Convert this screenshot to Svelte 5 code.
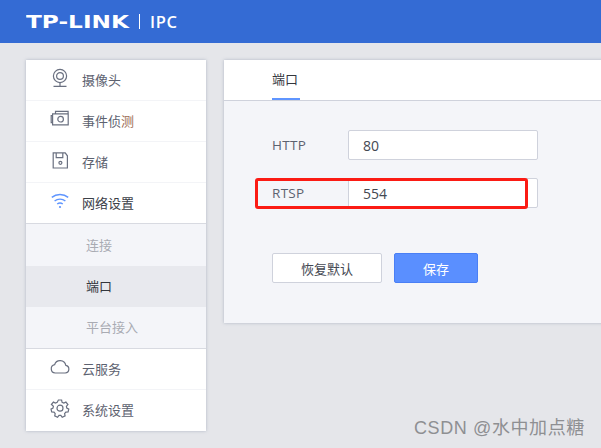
<script>
  const subs = [
    { label: "连接" },
    { label: "端口", active: true },
    { label: "平台接入" }
  ];
</script>

<div class="page">
  <header class="top">
    <span class="logo">TP-LINK</span>
    <span class="sep"></span>
    <span class="prod">IPC</span>
  </header>

  <div class="main">
    <nav class="side">
      <div class="item">
        <svg viewBox="0 0 20 20" width="20" height="20" fill="none" stroke="#6a7080" stroke-width="1.2">
          <circle cx="10" cy="8" r="6.6" />
          <circle cx="10" cy="8" r="3.4" />
          <path d="M10 14.6V18M3.5 18.4h13" />
        </svg>
        <span>摄像头</span>
      </div>
      <div class="item">
        <svg viewBox="0 0 20 20" width="20" height="20" fill="none" stroke="#6a7080" stroke-width="1.2">
          <path d="M2.6 6.6H1.2v7h1.400M2.600 4.800h15.600v11H2.600zM5.500 4.600V2.400h12.600v2.400" />
          <circle cx="10.600" cy="10.200" r="2.800" />
        </svg>
        <span>事件侦<span class="tinted">测</span></span>
      </div>
      <div class="item">
        <svg viewBox="0 0 20 20" width="20" height="20" fill="none" stroke="#6a7080" stroke-width="1.2">
          <path d="M3.200 2.800h12l2.200 3v12.200H3.200zM6.200 3v4.600h6.600V3" />
          <circle cx="10.400" cy="12.800" r="1.500" />
        </svg>
        <span>存储</span>
      </div>
      <div class="item open">
        <svg viewBox="0 0 20 20" width="20" height="20" fill="none" stroke="#5f95ff" stroke-width="1.4">
          <path d="M1.800 6.400C6.400 2.600 13.600 2.600 18.200 6.400" />
          <path d="M4.600 10c3-2.500 7.800-2.500 10.800 0" />
          <path d="M7.200 13c1.600-1.200 4-1.200 5.600 0" />
          <circle cx="10" cy="16" r="1.100" fill="#5f95ff" stroke="none" />
        </svg>
        <span>网络设置</span>
      </div>
      <div class="subs">
        {#each subs as s}
          <div class="sub" class:active={s.active}>{s.label}</div>
        {/each}
      </div>
      <div class="item">
        <svg viewBox="0 0 20 20" width="20" height="20" fill="none" stroke="#6a7080" stroke-width="1.2">
          <path d="M5.200 16h10a3.900 3.900 0 0 0 .6-7.700 5.800 5.800 0 0 0-11.200-.6 4.200 4.200 0 0 0 .6 8.300z" />
        </svg>
        <span>云服务</span>
      </div>
      <div class="item last">
        <svg viewBox="0 0 20 20" width="20" height="20" fill="none" stroke="#6a7080" stroke-width="1.2">
          <path d="M8.400 2h3.200l.5 2.300 1.700.8 2.100-1 2 2.400-1.500 1.800.4 1.800 2 1-.7 2.900-2.300.1-1.200 1.500.5 2.300-2.900 1.300-1.400-1.800h-1.800l-1.400 1.800-2.900-1.300.5-2.300-1.200-1.500-2.300-.1-.7-2.900 2-1 .4-1.800L1.400 6.500l2-2.400 2.100 1 1.700-.8z" />
          <circle cx="10" cy="10.200" r="3" />
        </svg>
        <span>系统设置</span>
      </div>
    </nav>

    <section class="panel">
      <div class="tabs">
        <div class="tab">端口</div>
      </div>
      <div class="form">
        <div class="row">
          <span class="lbl">HTTP</span>
          <div class="field">80</div>
        </div>
        <div class="row">
          <span class="lbl">RTSP</span>
          <div class="field">554</div>
          <div class="mark"></div>
        </div>
        <div class="btns">
          <button class="btn plain">恢复默认</button>
          <button class="btn primary">保存</button>
        </div>
      </div>
    </section>
  </div>

  <div class="wm">CSDN @水中加点糖</div>
</div>

<style>
:global(body) {
  margin: 0;
}
.page {
  position: relative;
  width: 601px;
  height: 448px;
  overflow: hidden;
  background: #e5e6ea;
  font-family: "Noto Sans CJK SC", "Open Sans", sans-serif;
  font-size: 13px;
  color: #5d6270;
}
.top {
  height: 43px;
  background: #346bd4;
  display: flex;
  align-items: center;
  padding-left: 26px;
  color: #fff;
}
.logo {
  font-family: "DejaVu Sans", sans-serif;
  font-weight: 700;
  font-size: 18px;
  line-height: 20px;
  width: 113px;
  transform: scaleX(1.29);
  transform-origin: left center;
}
.sep {
  width: 1px;
  height: 15px;
  background: #fff;
  margin-right: 10px;
}
.prod {
  font-family: "Open Sans", sans-serif;
  font-size: 16.5px;
  font-weight: 600;
  letter-spacing: 0.6px;
}
.main {
  display: flex;
  align-items: flex-start;
  padding-top: 17px;
  padding-left: 26px;
  gap: 18px;
}
.side {
  flex: none;
  width: 180px;
  background: #fff;
  box-shadow: 0 0 3px rgba(130, 140, 165, 0.55);
}
.item {
  height: 41px;
  box-sizing: border-box;
  display: flex;
  align-items: center;
  padding-left: 24px;
  padding-bottom: 2px;
  gap: 12px;
  border-bottom: 1px solid #f3f4f7;
}
.item svg {
  margin-top: -3px;
}
.item.open {
  color: #3c4048;
  border-bottom: 1px solid #d8dae1;
}
.item.last {
  border-bottom: 0;
}
.tinted {
  color: #9a6a50;
}
.subs {
  background: #f4f5f9;
  border-bottom: 1px solid #d8dae1;
  padding-top: 1px;
}
.sub {
  height: 41px;
  box-sizing: border-box;
  display: flex;
  align-items: center;
  padding-left: 60px;
  padding-bottom: 2px;
  color: #a9abb3;
}
.sub.active {
  background: #e8e9ee;
  color: #33363d;
}
.panel {
  flex: none;
  width: 400px;
  height: 263px;
  background: #f4f5f9;
  box-shadow: 0 0 3px rgba(130, 140, 165, 0.55);
}
.tabs {
  height: 40px;
  background: #fff;
  border-bottom: 1px solid #cfd2dc;
  padding-left: 48px;
}
.tab {
  width: 28px;
  height: 40px;
  box-sizing: border-box;
  line-height: 38px;
  color: #33363d;
  border-bottom: 2px solid #5f95ff;
}
.form {
  padding: 29px 0 0 48px;
}
.row {
  position: relative;
  display: flex;
  align-items: center;
  height: 30px;
  margin-bottom: 18px;
}
.lbl {
  width: 76px;
  font-family: "Open Sans", sans-serif;
  font-size: 13.5px;
  letter-spacing: 0.3px;
}
.field {
  width: 190px;
  height: 30px;
  box-sizing: border-box;
  padding-left: 14px;
  line-height: 30px;
  background: #fff;
  border: 1px solid #cfd2dc;
  border-radius: 2px;
  font-family: "Open Sans", sans-serif;
  font-size: 14px;
  color: #444852;
}
.mark {
  position: absolute;
  left: -17px;
  top: 0;
  width: 273px;
  height: 31px;
  box-sizing: border-box;
  border: 3px solid #fb1b14;
  border-radius: 3px;
}
.btns {
  display: flex;
  gap: 12px;
  margin-top: 45px;
}
.btn {
  height: 30px;
  box-sizing: border-box;
  border-radius: 2px;
  font-family: inherit;
  font-size: 13px;
  padding: 0;
}
.plain {
  width: 110px;
  background: #fff;
  border: 1px solid #cfd2dc;
  color: #444852;
}
.primary {
  width: 84px;
  background: #5a8fff;
  border: 1px solid #4a7ff5;
  color: #fff;
}
.wm {
  position: absolute;
  left: 414px;
  top: 416px;
  font-family: "Liberation Sans", "Noto Sans CJK SC", sans-serif;
  font-size: 18px;
  line-height: 24px;
  letter-spacing: 0.6px;
  white-space: nowrap;
  color: #8e8f92;
}
</style>
